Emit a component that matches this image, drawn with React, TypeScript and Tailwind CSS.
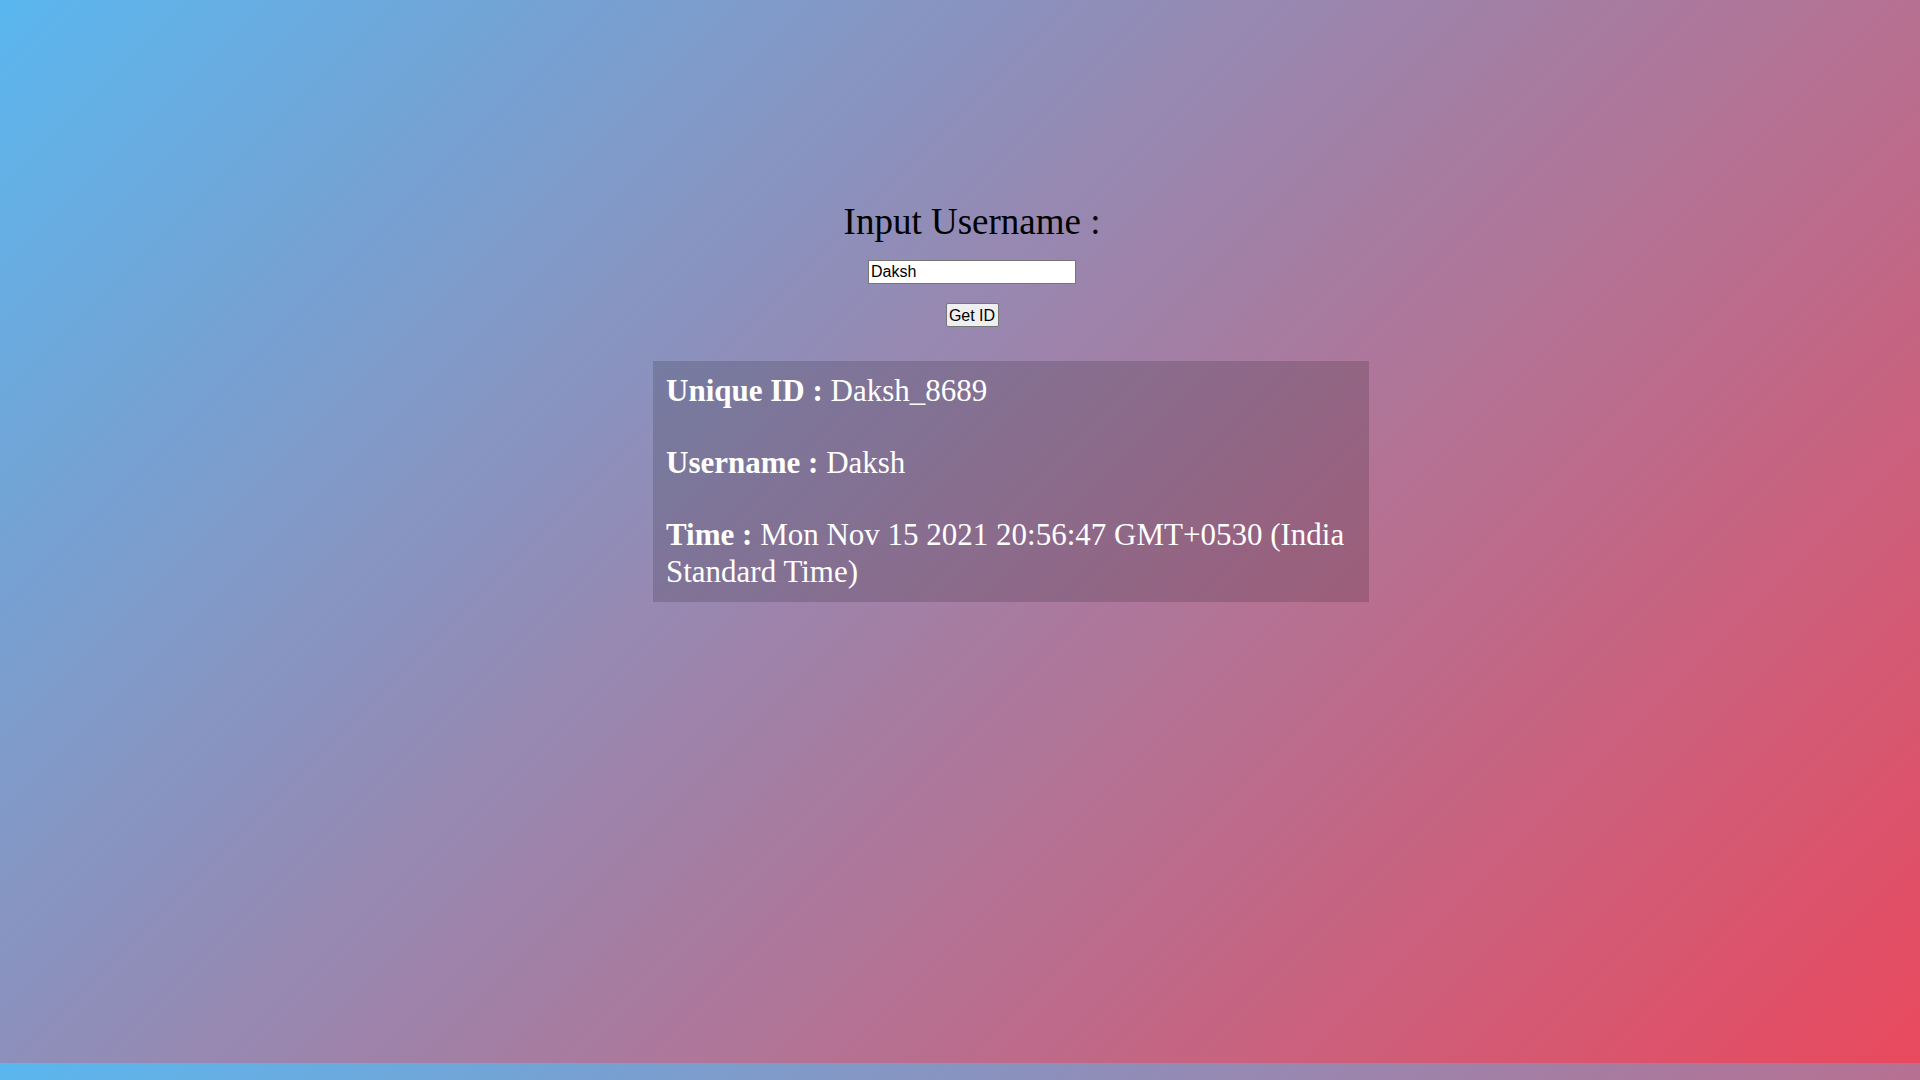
import { useState } from 'react'

export default function App() {
  const [name, setName] = useState('Daksh')

  return (
    <div className="w-full h-[1080px] overflow-hidden bg-[linear-gradient(135deg,#5ab7ef,#e9495e)] bg-[length:100%_1063px] bg-repeat-y font-['Liberation_Serif',serif]">
      <div className="flex flex-col pt-[200px]">
        {/* Form */}
        <div className="flex flex-col items-center pl-[24px]">
          <h1 className="text-[37px] leading-[44px] text-black">Input Username :</h1>
          <input
            value={name}
            onChange={(e) => setName(e.target.value)}
            className="mt-[16px] w-[208px] h-[24px] px-[2px] bg-white border border-[#767676] text-[16px] text-black font-['Liberation_Sans',Arial,sans-serif] outline-none"
          />
          <button className="mt-[19px] w-[53px] h-[24px] bg-[#efefef] border border-[#767676] rounded-[2px] text-[16px] text-black font-['Liberation_Sans',Arial,sans-serif]">
            Get ID
          </button>
        </div>

        {/* Result */}
        <div className="mt-[34px] ml-[653px] w-[716px] bg-black/15 pt-[12px] pb-[12px] pl-[13px] pr-[6px] text-white text-[31px] leading-[36.5px] flex flex-col gap-[35.5px]">
          <p>
            <b>Unique ID :</b> {name}_8689
          </p>
          <p>
            <b>Username :</b> {name}
          </p>
          <p>
            <b>Time :</b> Mon Nov 15 2021 20:56:47 GMT+0530 (India Standard Time)
          </p>
        </div>
      </div>
    </div>
  )
}
